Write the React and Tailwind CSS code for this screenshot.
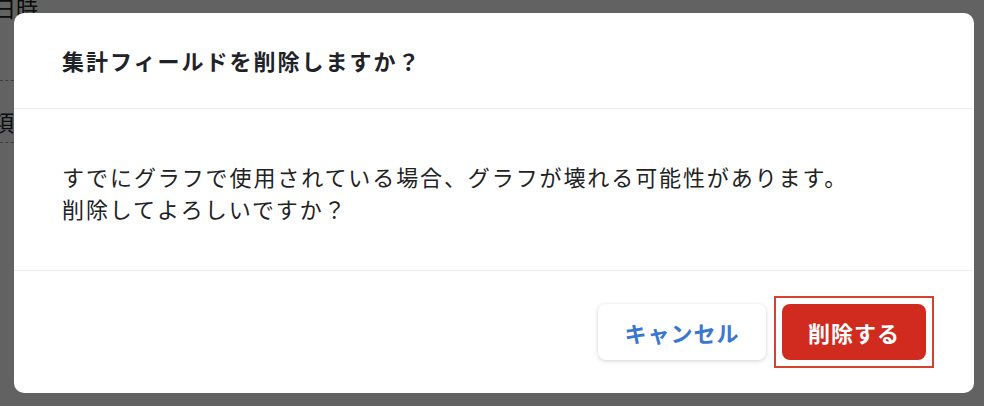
const font = {
  fontFamily: '"Noto Sans CJK JP", "Noto Sans", sans-serif',
};

const BackgroundPage = () => (
  <div className="absolute inset-0 bg-[#f4f4f4]">
    <div className="text-[22px] leading-none text-[#222] -ml-[6px] -mt-[4px]">日時</div>
    <div className="mt-[62px] border-t border-dashed border-[#999] w-[30px]" />
    <div className="mt-[24px] text-[22px] text-[#223] -ml-[8px]">項</div>
    <div className="mt-[4px] border-t border-dashed border-[#999] w-[30px]" />
    {/* Overlay */}
    <div className="absolute inset-0 bg-black/60" />
  </div>
);

const App = () => {
  return (
    <div className="relative w-[984px] h-[406px] overflow-hidden" style={font}>
      <BackgroundPage />

      <div className="relative pt-[13px] pl-[14px] pr-[10px]">
        <div className="bg-white rounded-[10px] h-[380px] flex flex-col">
          {/* Header */}
          <div className="h-[96px] flex items-center px-12 border-b border-[#ececec]">
            <h2 className="text-[22px] font-bold text-[#1f2328] tracking-[2px]">
              集計フィールドを削除しますか？
            </h2>
          </div>

          {/* Body */}
          <div className="h-[162px] flex flex-col justify-center px-12 pt-[4px] border-b border-[#ececec]">
            <p className="text-[22px] leading-[32px] text-[#222] tracking-[1.9px]">
              すでにグラフで使用されている場合、グラフが壊れる可能性があります。
              <br />
              削除してよろしいですか？
            </p>
          </div>

          {/* Footer */}
          <div className="flex-1 flex items-center justify-end gap-2 px-[40px]">
            <button className="w-[168px] h-[56px] rounded-lg bg-white shadow-[0_1px_4px_rgba(0,0,0,0.18)] text-[#3a78d0] text-[22px] font-bold tracking-[1px]">
              キャンセル
            </button>
            <div className="border-2 border-[#d5432f] p-[6px]">
              <button className="w-[144px] h-[56px] rounded-lg bg-[#d12b20] text-white text-[22px] font-bold tracking-[1px] block">
                削除する
              </button>
            </div>
          </div>
        </div>
      </div>
    </div>
  );
};

export default App;
